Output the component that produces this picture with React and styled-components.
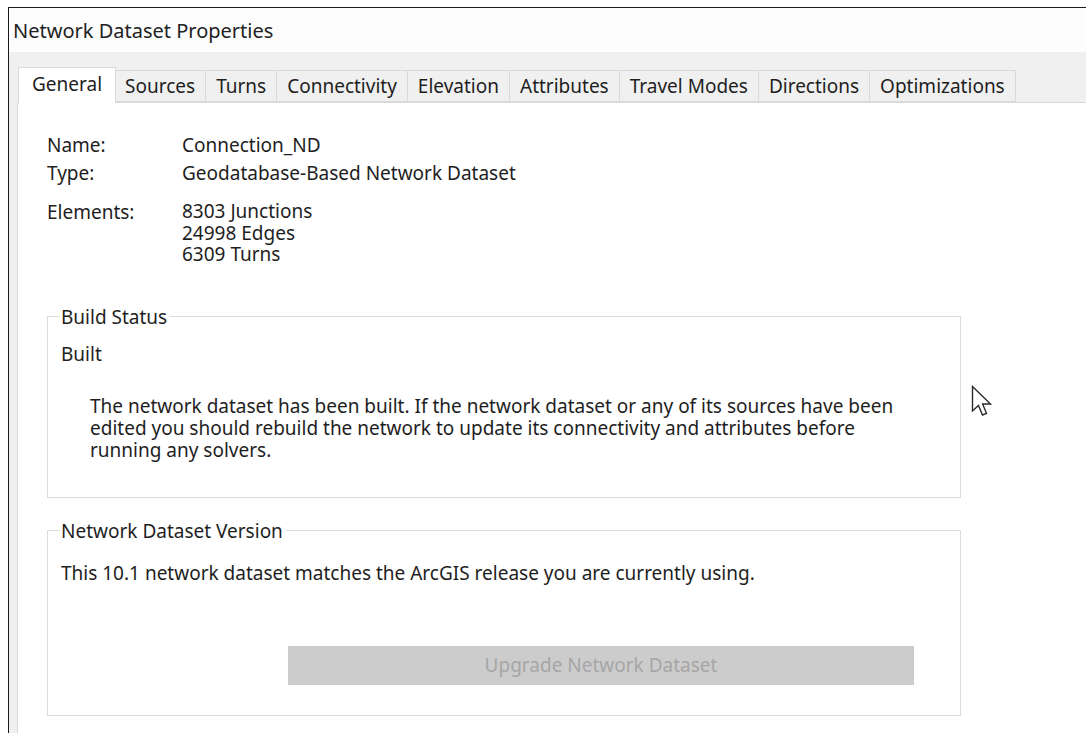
import React from "react";
import styled, { createGlobalStyle } from "styled-components";

const GlobalStyle = createGlobalStyle`
  html, body {
    margin: 0;
    padding: 0;
    background: #ffffff;
  }
  body {
    font-family: "Noto Sans", "Open Sans", sans-serif;
    font-size: 19px;
    color: #1e1e1e;
    overflow: hidden;
  }
`;

const Page = styled.div`
  width: 1086px;
  height: 733px;
  padding: 7px 0 0 8px;
  box-sizing: border-box;
  background: #ffffff;
  position: relative;
`;

const Window = styled.div`
  height: 100%;
  border-top: 1px solid #1a1a1a;
  border-left: 1px solid #1a1a1a;
  display: flex;
  flex-direction: column;
`;

const TitleBar = styled.div`
  height: 44px;
  display: flex;
  align-items: center;
  padding-left: 4px;
  font-size: 20px;
  color: #222;
  background: #fdfdfd;
  flex: none;
`;

const Frame = styled.div`
  flex: 1;
  background: #f0f0f0;
  padding: 15px 0 0 8px;
  display: flex;
  flex-direction: column;
`;

const TabRow = styled.div`
  display: flex;
  align-items: flex-end;
  height: 36px;
  flex: none;
  position: relative;
  z-index: 1;
`;

const Tab = styled.div`
  height: ${(p) => (p.$active ? "36px" : "32px")};
  box-sizing: border-box;
  padding: ${(p) => (p.$active ? "0 13px 3px" : "0 10px 0")};
  margin: ${(p) => (p.$active ? "0 -1px 0 1px" : "0 0 1px -1px")};
  display: flex;
  align-items: center;
  background: ${(p) => (p.$active ? "#ffffff" : "#f0f0f0")};
  border: 1px solid #d9d9d9;
  border-bottom: ${(p) => (p.$active ? "none" : "1px solid #d9d9d9")};
  color: #1e1e1e;
  font-size: 19px;
  white-space: nowrap;
  position: relative;
  z-index: ${(p) => (p.$active ? 2 : 1)};
`;

const Panel = styled.div`
  flex: 1;
  margin-top: -1px;
  background: #ffffff;
  border-top: 1px solid #d9d9d9;
  border-left: 1px solid #d9d9d9;
  padding: 31px 0 0 29px;
  display: flex;
  flex-direction: column;
`;

const InfoGrid = styled.div`
  display: grid;
  grid-template-columns: 135px 1fr;
  row-gap: 6px;
  line-height: 22px;
  margin-bottom: 40px;
`;

const Label = styled.div`
  margin-top: ${(p) => p.$gap || 0}px;
`;

const Value = styled.div`
  margin-top: ${(p) => p.$gap || 0}px;
  display: flex;
  flex-direction: column;
`;

const Line = styled.div`
  height: ${(p) => p.$h || 22}px;
  line-height: ${(p) => p.$h || 22}px;
  white-space: nowrap;
`;

const Group = styled.fieldset`
  margin: 0;
  width: 914px;
  box-sizing: border-box;
  border: 1px solid #dcdcdc;
  padding: 0 13px;
  height: ${(p) => p.$h}px;
  margin-bottom: ${(p) => p.$mb || 0}px;
  position: relative;
`;

const Legend = styled.legend`
  padding: 0 3px 0 1px;
  line-height: 22px;
  margin-left: -1px;
`;

const Status = styled.div`
  margin-top: 15px;
  line-height: 22px;
`;

const Note = styled.div`
  margin: 30px 0 0 29px;
  display: flex;
  flex-direction: column;
`;

const VersionText = styled.div`
  margin-top: 20px;
  line-height: 22px;
`;

const ButtonRow = styled.div`
  display: flex;
  justify-content: flex-end;
  margin: 62px 33px 0 0;
`;

const UpgradeButton = styled.button`
  width: 626px;
  height: 39px;
  background: #cccccc;
  border: none;
  color: #a6a6a6;
  font-family: inherit;
  font-size: 19px;
`;

const Cursor = styled.svg`
  position: absolute;
  left: 971px;
  top: 385px;
`;

const tabs = [
  "General",
  "Sources",
  "Turns",
  "Connectivity",
  "Elevation",
  "Attributes",
  "Travel Modes",
  "Directions",
  "Optimizations",
];

const elements = ["8303 Junctions", "24998 Edges", "6309 Turns"];

const noteLines = [
  "The network dataset has been built. If the network dataset or any of its sources have been",
  "edited you should rebuild the network to update its connectivity and attributes before",
  "running any solvers.",
];

export default function App() {
  return (
    <>
      <GlobalStyle />
      <Page>
        <Window>
          <TitleBar>Network Dataset Properties</TitleBar>
          <Frame>
            <TabRow>
              {tabs.map((t, i) => (
                <Tab key={t} $active={i === 0}>
                  {t}
                </Tab>
              ))}
            </TabRow>
            <Panel>
              <InfoGrid>
                <Label>Name:</Label>
                <Value>Connection_ND</Value>
                <Label>Type:</Label>
                <Value>Geodatabase-Based Network Dataset</Value>
                <Label $gap={11}>Elements:</Label>
                <Value $gap={11}>
                  {elements.map((e) => (
                    <Line key={e} $h={21.5}>
                      {e}
                    </Line>
                  ))}
                </Value>
              </InfoGrid>
              <Group $h={192} $mb={22}>
                <Legend>Build Status</Legend>
                <Status>Built</Status>
                <Note>
                  {noteLines.map((l) => (
                    <Line key={l}>{l}</Line>
                  ))}
                </Note>
              </Group>
              <Group $h={196}>
                <Legend>Network Dataset Version</Legend>
                <VersionText>
                  This 10.1 network dataset matches the ArcGIS release you are currently using.
                </VersionText>
                <ButtonRow>
                  <UpgradeButton disabled>Upgrade Network Dataset</UpgradeButton>
                </ButtonRow>
              </Group>
            </Panel>
          </Frame>
        </Window>
        <Cursor width="24" height="36" viewBox="0 0 24 36">
          <path
            d="M1.5 1.5 L1.5 26 L7.5 20.5 L11.5 30 L15.5 28.3 L11.6 19 L19.5 19 Z"
            fill="#ffffff"
            stroke="#2a2a2a"
            strokeWidth="1.4"
            strokeLinejoin="miter"
          />
        </Cursor>
      </Page>
    </>
  );
}
